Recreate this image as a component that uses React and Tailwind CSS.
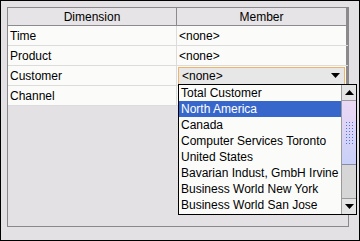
import { useState } from 'react';

const rows = ['Time', 'Product', 'Customer', 'Channel'];

const customers = [
  'Total Customer',
  'North America',
  'Canada',
  'Computer Services Toronto',
  'United States',
  'Bavarian Indust, GmbH Irvine',
  'Business World New York',
  'Business World San Jose',
];

function Arrow({ up }) {
  return (
    <svg width="9" height="5" viewBox="0 0 9 5">
      {up ? <path d="M0 5 L4.5 0 L9 5 Z" fill="#000" /> : <path d="M0 0 L9 0 L4.5 5 Z" fill="#000" />}
    </svg>
  );
}

export default function App() {
  const [selected] = useState(1);

  return (
    <div className="relative w-[360px] h-[241px] border border-black bg-[#e3e1e3] p-[6px] font-['Liberation_Sans',Arial,sans-serif] text-[12px] text-black leading-none">
      <div className="w-[342px] h-[220px] border border-[#8a888a] flex flex-col">
        {/* header */}
        <div className="flex h-[18px] border-b border-[#8c8a8c]">
          <div className="w-[169px] border-r border-[#8c8a8c] bg-[#e6e4e6] flex items-center justify-center">Dimension</div>
          <div className="flex-1 border-r-2 border-[#8c8a8c] bg-[#e6e4e6] flex items-center justify-center">Member</div>
        </div>
        {rows.map((r) => (
          <div key={r} className="flex h-[20px] bg-[#fbfcfa] border-b border-[#dcdcdc]">
            <div className="w-[169px] border-r border-[#dcdcdc] flex items-center pl-[2px]">{r}</div>
            <div className="flex-1 flex items-center pl-[2px] border-r-2 border-[#8c8a8c]">
              {r === 'Customer' ? (
                <div className="w-full h-[18px] -ml-[1px] mr-[1px] border border-[#f0b468] bg-[#e8e7e7] flex items-center justify-between pl-[3px] pr-[4px]">
                  <span>&lt;none&gt;</span>
                  <Arrow />
                </div>
              ) : r === 'Channel' ? null : (
                <span>&lt;none&gt;</span>
              )}
            </div>
          </div>
        ))}
      </div>

      {/* dropdown popup */}
      <div className="absolute left-[177px] top-[83px] w-[179px] h-[131px] border border-black bg-[#fbfcfa] flex">
        <div className="flex-1 flex flex-col">
          {customers.map((c, i) => (
            <div
              key={c}
              className={`h-[16px] flex items-center pl-[2px] whitespace-nowrap ${i === selected ? 'bg-[#3867cb] text-white' : ''}`}
            >
              {c}
            </div>
          ))}
        </div>
        <div className="w-[15px] flex flex-col bg-[#d6d6d6] border-l border-[#9a9a9a]">
          <div className="h-[16px] flex items-center justify-center bg-[#e4e4e4] border-b border-[#9a9a9a]">
            <Arrow up />
          </div>
          <div className="h-[64px] border-b border-[#8a8aa8] bg-[linear-gradient(to_bottom,#ecd8f4,#c8d0f8)] flex items-center justify-center">
            <div className="w-[9px] h-[24px] bg-[radial-gradient(#4a78e0_0.8px,transparent_1px)] bg-[length:3px_3px]" />
          </div>
          <div className="flex-1" />
          <div className="h-[16px] flex items-center justify-center bg-[#e4e4e4] border-t border-[#9a9a9a]">
            <Arrow />
          </div>
        </div>
      </div>
    </div>
  );
}
